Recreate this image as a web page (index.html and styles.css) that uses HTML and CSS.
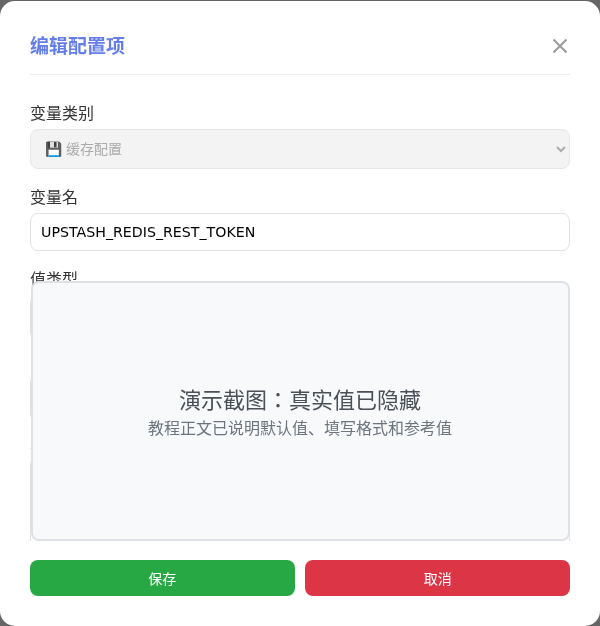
FILE: index.html
```html
<!DOCTYPE html>
<html>
<head>
<meta charset="utf-8">
<title>编辑配置项</title>
<link rel="stylesheet" href="styles.css">
</head>
<body>
<div class="modal">
  <header class="modal-header">
    <h2 class="modal-title">编辑配置项</h2>
    <svg class="close" viewBox="0 0 14 14" width="14" height="14"><path d="M0.5 0.5L13.5 13.5M13.5 0.5L0.5 13.5"/></svg>
  </header>
  <form class="form">
    <div class="group">
      <label class="label">变量类别</label>
      <select class="field select" disabled><option>💾 缓存配置</option></select>
    </div>
    <div class="group">
      <label class="label">变量名</label>
      <input class="field input" value="UPSTASH_REDIS_REST_TOKEN">
    </div>
    <div class="group masked-wrap">
      <label class="label">值类型</label>
      <div class="hidden-fields">
        <div class="stub stub-a"></div>
        <div class="stub stub-b"></div>
        <div class="stub-label">示例</div>
        <div class="stub stub-c"></div>
      </div>
      <div class="mask">
        <div class="mask-title">演示截图：真实值已隐藏</div>
        <div class="mask-sub">教程正文已说明默认值、填写格式和参考值</div>
      </div>
    </div>
    <div class="actions">
      <button type="button" class="btn save">保存</button>
      <button type="button" class="btn cancel">取消</button>
    </div>
  </form>
</div>
</body>
</html>
```
FILE: styles.css
```css
* { box-sizing: border-box; }
html, body { margin: 0; height: 100%; }
body {
  background: #666;
  padding-top: 1px;
  overflow: hidden;
  font-family: "DejaVu Sans", "Noto Sans CJK JP", sans-serif;
}
.modal {
  background: #fff;
  height: 625px;
  border-radius: 15px;
  padding: 30px;
  display: flex;
  flex-direction: column;
  will-change: transform;
}
.modal-header {
  display: flex;
  justify-content: space-between;
  align-items: center;
  height: 44px;
  padding-bottom: 14px;
  margin-bottom: 27px;
  border-bottom: 1px solid #eee;
  flex: none;
}
.modal-title { margin: 0; font-size: 19px; font-weight: 700; color: #667eea; line-height: 30px; }
.close { margin-right: 3px; }
.close path { stroke: #999; stroke-width: 2; fill: none; }
.form { display: flex; flex-direction: column; flex: 1; min-height: 0; }
.group { margin-bottom: 17px; }
.label { display: block; font-size: 16px; line-height: 24px; color: #333; margin-bottom: 3px; }
.field {
  display: block;
  width: 100%;
  font: inherit;
  font-size: 14.2px;
  border: 1px solid #e0e0e0;
  border-radius: 8px;
  padding: 0 10px;
  background: #fff;
  color: #000;
}
.select { height: 40px; font-size: 14px; word-spacing: -0.5px; background: #f3f3f3; border-color: #e6e6e6; color: #aaa; opacity: 1; }
.input { height: 38px; }
.masked-wrap { position: relative; flex: 1 1 0; min-height: 0; margin-bottom: 19px; overflow: hidden; }
.hidden-fields { display: flex; flex-direction: column; }
.stub { border: 1px solid #e0e0e0; border-radius: 8px; flex: none; }
.stub-a { height: 45px; }
.stub-b { height: 48px; margin-top: 34px; }
.stub-label { font-size: 16px; line-height: 24px; color: #333; margin-top: 10px; }
.stub-c { height: 120px; margin-top: 1px; }
.mask {
  position: absolute;
  left: 1px;
  right: 0;
  top: 13px;
  bottom: 0;
  padding: 4px 1px 0 0;
  background: #f8f9fa;
  border: 2px solid #dee2e6;
  border-radius: 8px;
  display: flex;
  flex-direction: column;
  align-items: center;
  justify-content: center;
}
.mask-title { font-size: 22px; line-height: 30px; color: #495057; }
.mask-sub { font-size: 16px; line-height: 24px; color: #6c757d; margin-top: 1px; }
.actions { display: flex; gap: 10px; flex: none; }
.btn { flex: 1 1 0; height: 36px; border: 0; border-radius: 8px; color: #fff; font: inherit; font-size: 14px; padding: 0; }
.save { background: #28a745; }
.cancel { background: #dc3545; padding-left: 1px; }
```
